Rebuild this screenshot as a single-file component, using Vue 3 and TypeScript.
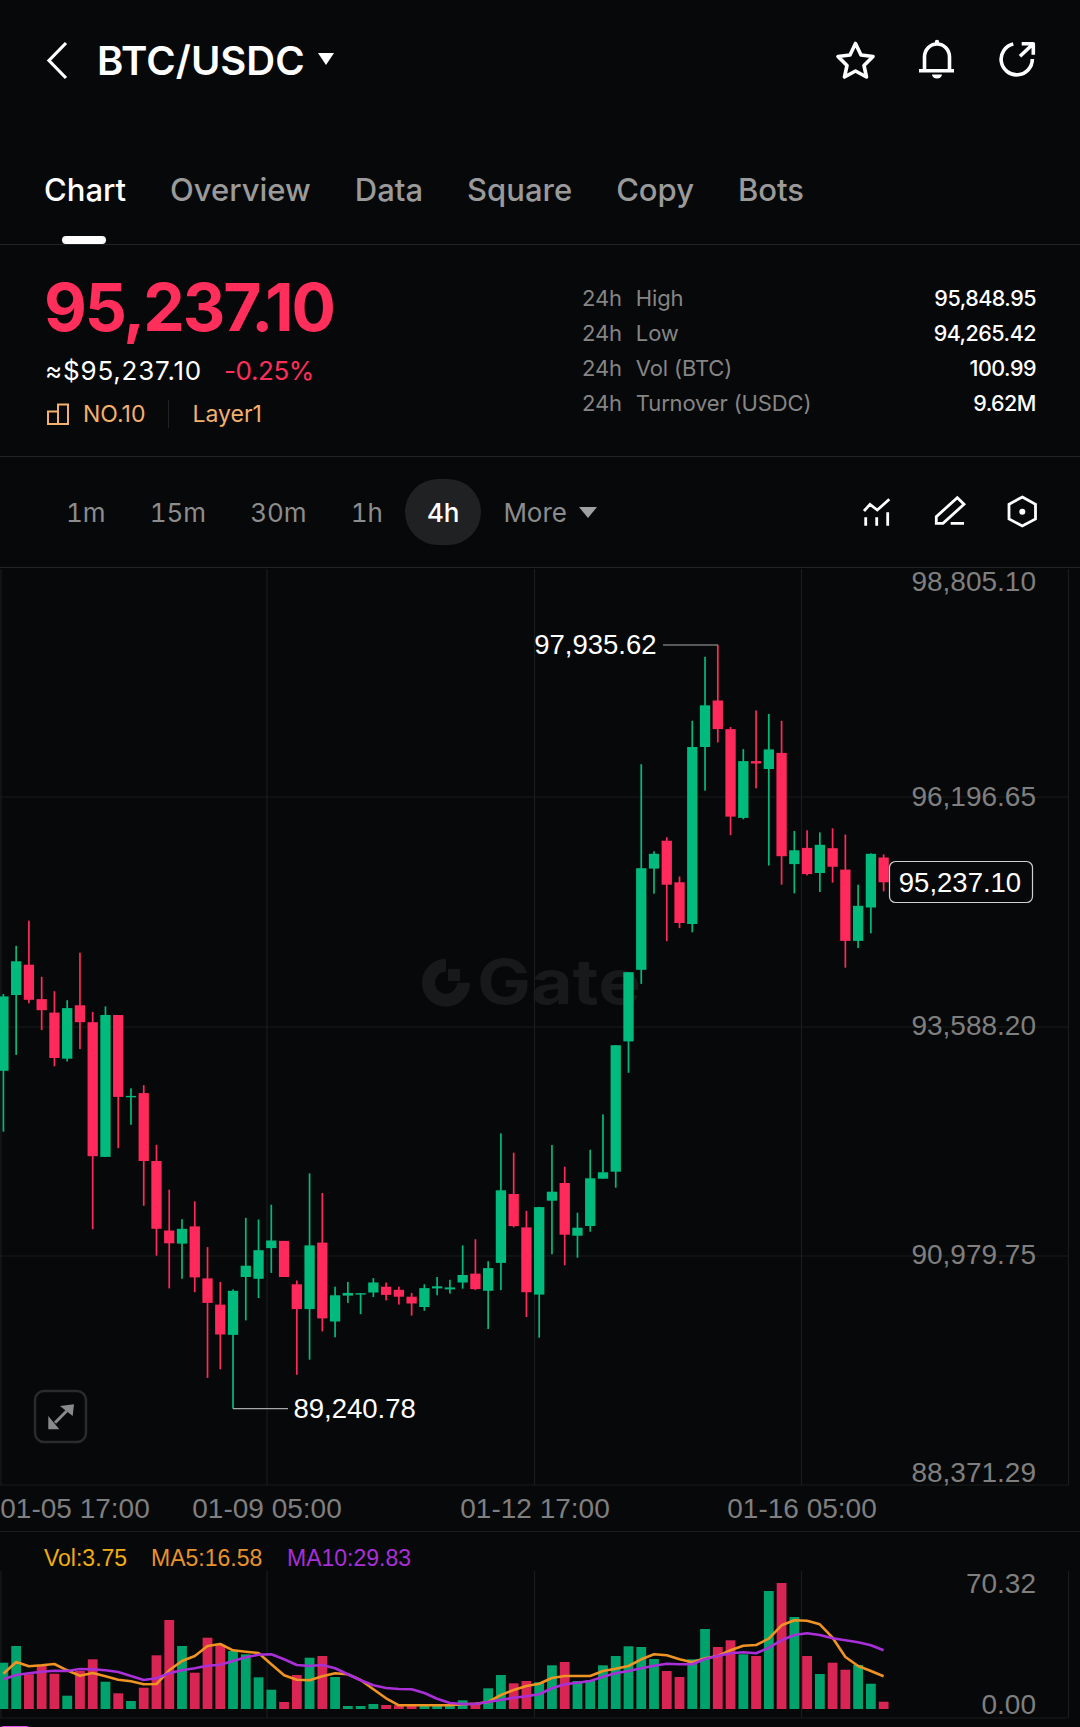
<script setup lang="ts">
// [high, bodyTop, bodyBottom, low, up] in page pixels
type Candle = [number, number, number, number, number];

const candles: Candle[] = [
  [993, 995.4, 1069.8, 1130.7, 1], [944.8, 960.3, 994, 1053.9, 1], [919.6, 963.7, 998.8, 1002.3, 0],
  [975.8, 998.1, 1009.2, 1029.1, 0], [990.2, 1011.6, 1057, 1065.3, 0], [999.2, 1007.1, 1057.7, 1060.5, 1],
  [951.7, 1004.3, 1021.2, 1048.1, 0], [1010.9, 1021.2, 1155.2, 1228.2, 0], [1005.4, 1014, 1155.9, 1155.9, 1],
  [1014, 1014, 1095.9, 1147.2, 0], [1087.3, 1094.9, 1096.3, 1123.8, 1], [1084.2, 1092.1, 1160, 1204.8, 0],
  [1143.8, 1160, 1227.8, 1254.7, 0], [1188.6, 1229.5, 1242.3, 1287.4, 0], [1218.2, 1227.8, 1242.6, 1277.8, 1],
  [1200.3, 1225.4, 1276.4, 1291.2, 0], [1246.1, 1277.4, 1301.9, 1376.9, 0], [1280.9, 1303.6, 1333.5, 1368.3, 0],
  [1288.4, 1289.8, 1333.9, 1407.6, 1], [1216.8, 1264.7, 1276, 1319.4, 1], [1218.5, 1249.2, 1277.8, 1297, 1],
  [1203.7, 1239.5, 1247.1, 1271.9, 1], [1239.9, 1239.9, 1276, 1276, 0], [1279.5, 1283.3, 1308.1, 1373.8, 0],
  [1172.4, 1244.4, 1308.1, 1358.7, 1], [1192, 1241.6, 1317.4, 1330.4, 0], [1285.7, 1294.3, 1320.5, 1336.3, 1],
  [1280.9, 1291.9, 1294.6, 1301.9, 1], [1292.2, 1292.2, 1293.6, 1313.2, 1], [1277.1, 1281.5, 1291.5, 1296, 1],
  [1281.5, 1285.7, 1293.9, 1299.4, 0], [1285.7, 1288.8, 1295.7, 1303.6, 0], [1291.9, 1295.7, 1302.5, 1314.6, 0],
  [1283.3, 1287.1, 1306, 1309.8, 1], [1276, 1285.3, 1287.4, 1294.3, 1], [1278.8, 1286.4, 1288.4, 1292.6, 1],
  [1244.4, 1274, 1281.5, 1287.7, 1], [1238.2, 1272.6, 1288.1, 1289.1, 0], [1260.2, 1267.1, 1289.8, 1328, 1],
  [1132.4, 1189.3, 1261.9, 1289.1, 1], [1151.7, 1193, 1225.1, 1226.4, 0], [1209.9, 1226.4, 1291.2, 1316, 0],
  [1205.8, 1206.1, 1293.6, 1336.7, 1], [1144, 1190.7, 1199.7, 1253.3, 1], [1165.7, 1182, 1233.7, 1264.3, 0],
  [1211.7, 1226.7, 1234.7, 1256.7, 1], [1148.7, 1177.3, 1225, 1230.7, 1], [1113.3, 1171.3, 1177.7, 1177.7, 1],
  [1044.2, 1044.2, 1170.7, 1186.7, 1], [971.2, 971.2, 1040.4, 1071.8, 1], [763.2, 867.2, 968.8, 982.9, 1],
  [850.3, 852.8, 867.6, 892.7, 1], [836.2, 839.7, 883.7, 940.2, 0], [875.5, 881.3, 922, 927.1, 0],
  [719.8, 746, 923, 931.3, 1], [655.8, 704.3, 746, 789.7, 1], [644.1, 699.5, 728.1, 741.5, 0],
  [726, 728.1, 815.6, 834.2, 0], [748.1, 760.1, 816.9, 818.3, 1], [709.5, 760.1, 762.5, 787.3, 0],
  [712.9, 748.4, 768, 864.5, 1], [719.8, 751.9, 855.2, 883.7, 0], [830, 849.3, 863.1, 892.4, 1],
  [829.3, 846.9, 873.1, 874.4, 0], [831.4, 843.8, 872, 891, 1], [827.3, 847.2, 865.8, 881.7, 0],
  [833.5, 868.6, 939.9, 966.7, 0], [883.7, 904.8, 939.9, 947.1, 1], [852.4, 852.8, 906.5, 932.3, 1],
  [853.4, 856.5, 881.3, 890.3, 0],
];

// px above the volume baseline
const volumes = [
  46.3, 63, 34.7, 43, 35.3, 13.3, 38, 49.7, 27.3, 15.7, 8, 21.3, 53.7, 89, 63, 36.3, 71.3, 64, 58, 54.7,
  31.7, 19.3, 7, 34, 51.3, 53, 32, 3, 3, 5, 4, 3.7, 3.7, 3.7, 3.7, 3.7, 8.7, 6.3, 20.7, 34,
  25.7, 28, 26.7, 43.7, 47, 28, 28.7, 43.7, 53, 62.7, 62, 50, 38, 32, 49.7, 80, 62, 68.7, 54.7, 53,
  118, 126, 92, 53, 35, 46.3, 39.3, 44, 25.3, 7.3,
];
const ma5 = [
  35.3, 47, 42.7, 43.7, 45, 38.7, 33.3, 36, 32.7, 29.3, 27.7, 24.7, 25, 38.7, 48, 53, 63, 65, 58.7, 57.3,
  56, 44.7, 33.7, 29.3, 28.7, 32.7, 35.7, 34.7, 29, 19.7, 10.7, 3.7, 3.7, 3.7, 3.7, 3.7, 4.7, 5.3, 7, 14,
  19, 23, 25.3, 31, 33, 33, 33, 38, 40.3, 43, 49.7, 54.7, 53.7, 49.7, 46.7, 50.7, 53, 58.7, 63.3, 64,
  70.3, 83.7, 88.7, 88.3, 84.7, 71.3, 52, 43, 38, 32.7,
];
const ma10 = [
  29.7, 34, 35.7, 37.3, 38.3, 38, 40, 39.7, 38.7, 37, 33, 29, 30.7, 35.7, 38.7, 40.7, 43.3, 44.3, 48, 51.7,
  54.3, 54.7, 49.7, 44, 43, 44, 40.7, 34.7, 28.7, 23.7, 21, 20, 19.7, 16, 10.3, 6, 5, 5, 7, 9,
  11.3, 12.7, 14.7, 20.7, 24.7, 26.3, 28, 32.3, 35.7, 38, 40.7, 43.3, 45.3, 44.7, 44.7, 50, 53, 55.7, 56.7, 55.7,
  61.3, 68.7, 74, 75.7, 74, 70.7, 68.7, 66.7, 63.7, 58.7,
];

const baseY = 1708;
const xAt = (i: number) => 3.4 + 12.757 * i;
const linePoints = (series: number[]) =>
  series.map((v, i) => `${xAt(i).toFixed(1)},${(baseY - v).toFixed(1)}`).join(" ");

const tabs = ["Chart", "Overview", "Data", "Square", "Copy", "Bots"];
const frames = ["1m", "15m", "30m", "1h", "4h"];
const stats = [
  { label: "High", value: "95,848.95" },
  { label: "Low", value: "94,265.42" },
  { label: "Vol (BTC)", value: "100.99" },
  { label: "Turnover (USDC)", value: "9.62M" },
];
const gridX = [1, 267, 534.5, 801.5, 1068.5];
const gridY = [796, 1026, 1255];
const priceAxis = [
  { text: "98,805.10", y: 590 },
  { text: "96,196.65", y: 804.5 },
  { text: "93,588.20", y: 1033.5 },
  { text: "90,979.75", y: 1262.5 },
  { text: "88,371.29", y: 1480.5 },
];
const timeAxis = [
  { text: "01-05 17:00", x: 75 },
  { text: "01-09 05:00", x: 267 },
  { text: "01-12 17:00", x: 535 },
  { text: "01-16 05:00", x: 802 },
];
</script>

<template>
  <div class="screen">
    <header class="topbar">
      <svg class="back" width="24" height="40" viewBox="0 0 24 40" aria-hidden="true">
        <path d="M20 3 3 20.5 20 38" />
      </svg>
      <span class="pair">BTC/USDC</span>
      <span class="caret"></span>
      <div class="top-actions">
        <svg width="44" height="44" viewBox="0 0 44 44" aria-hidden="true">
          <path d="M21.5 5.5 27 17l12 1.5-9 9L32.500 39l-11-6-11 6 2.500-11.500-9-9L16 17Z" />
        </svg>
        <svg width="42" height="44" viewBox="0 0 42 44" aria-hidden="true">
          <path d="M8.500 32V19a12.500 13 0 0 1 25 0v13M3 32.700h35" />
          <circle class="solid" cx="21" cy="4" r="2.200" />
          <path class="solid" d="M16 36.500h10a5 4 0 0 1-10 0Z" />
        </svg>
        <svg class="share" width="40" height="44" viewBox="0 0 40 44" aria-hidden="true">
          <path d="M15.300 6A15.600 15.600 0 1 0 34.300 21M22 18.300 35.300 5.700M23.700 5.700h11.600v11" />
        </svg>
      </div>
    </header>

    <nav class="tabs">
      <span v-for="(tab, i) in tabs" :key="tab" class="tab" :class="{ active: i === 0 }">{{ tab }}</span>
    </nav>

    <section class="ticker">
      <div class="ticker-main">
        <div class="last-price">95,237.10</div>
        <div class="sub-price">
          <span class="usd">≈$95,237.10</span>
          <span class="change">-0.25%</span>
        </div>
        <div class="rank">
          <svg width="24" height="22" viewBox="0 0 24 22" aria-hidden="true">
            <path d="M12 8.500H2V21h20V1.500H12V21" />
          </svg>
          <span>NO.10</span>
          <i class="rank-sep"></i>
          <span>Layer1</span>
        </div>
      </div>
      <div class="ticker-stats">
        <div v-for="s in stats" :key="s.label" class="stat">
          <span class="stat-label"><span>24h</span><span>{{ s.label }}</span></span>
          <span class="stat-value">{{ s.value }}</span>
        </div>
      </div>
    </section>

    <section class="toolbar">
      <span v-for="f in frames" :key="f" class="frame" :class="{ active: f === '4h' }">{{ f }}</span>
      <span class="frame more">More<i class="more-caret"></i></span>
      <div class="tools">
        <svg class="tool-lines" width="32" height="34" viewBox="0 0 32 34" aria-hidden="true">
          <path d="M4 16 10 9.300 17.300 15 29.300 4.300M5.700 22.300v8.400M16.700 22.300v8.400M27.700 17.300v13.400" />
        </svg>
        <svg width="38" height="34" viewBox="0 0 38 34" aria-hidden="true">
          <path d="M7.300 28.300v-6.600L28.300 2.700 35 9.300 14 28.300ZM21.700 28.300H35" />
        </svg>
        <svg width="40" height="36" viewBox="0 0 40 36" aria-hidden="true">
          <path d="M20.300 3 33.500 10.300V25L20.300 32 7 25V10.300Z" />
          <circle class="solid" cx="20.300" cy="17.700" r="3" />
        </svg>
      </div>
    </section>

    <svg class="chart" width="1080" height="1160" viewBox="0 567 1080 1160" aria-hidden="true">
      <!-- watermark sits under the grid and candles -->
      <g class="watermark">
        <path d="M446 964.200A17.500 17.500 0 1 0 463.500 981.700" />
        <rect x="448" y="968" width="12" height="12" />
        <text x="477" y="1003" textLength="164" lengthAdjust="spacingAndGlyphs">Gate</text>
      </g>

      <g class="grid">
        <line v-for="x in gridX" :key="x" :x1="x" :x2="x" y1="568" y2="1484" />
        <line v-for="x in gridX" :key="'v' + x" :x1="x" :x2="x" y1="1570" y2="1717" />
        <line v-for="y in gridY" :key="y" x1="0" x2="1068.500" :y1="y" :y2="y" />
        <line x1="0" x2="1068.500" y1="1484" y2="1484" />
        <line x1="0" x2="1080" y1="1530.500" y2="1530.500" />
        <line x1="0" x2="1068.500" y1="1717" y2="1717" />
      </g>

      <g v-for="(c, i) in candles" :key="i" :fill="c[4] ? '#00bb7c' : '#ff2a5b'">
        <rect :x="xAt(i) - 0.850" :y="c[0]" width="1.700" :height="c[3] - c[0]" />
        <rect :x="xAt(i) - 5.150" :y="c[1]" width="10.300" :height="c[2] - c[1]" />
      </g>

      <path class="marker" d="M663 644H718" />
      <path class="marker" d="M233 1407.600H288" />
      <text class="axis white" x="656.500" y="652.500" text-anchor="end">97,935.62</text>
      <text class="axis white" x="293.500" y="1416.500">89,240.78</text>

      <text v-for="p in priceAxis" :key="p.text" class="axis" x="1036" :y="p.y" text-anchor="end">{{ p.text }}</text>
      <text v-for="t in timeAxis" :key="t.text" class="axis" :x="t.x" y="1517" text-anchor="middle">{{ t.text }}</text>

      <rect class="price-tag" x="889.500" y="860.500" width="143" height="41" rx="6" />
      <text class="axis white" x="960" y="891" text-anchor="middle">95,237.10</text>

      <g class="expand">
        <rect x="35" y="1390" width="51" height="51" rx="9" />
        <path class="expand-line" d="M55 1421.700 66.700 1410" />
        <path class="expand-head" d="M60 1405 74 1403.300 72.700 1415ZM48.300 1415 59.300 1428.300H48.300Z" />
      </g>

      <text class="legend" x="44" y="1565" fill="#f2ad13">Vol:3.75</text>
      <text class="legend" x="151" y="1565" fill="#e8922e">MA5:16.58</text>
      <text class="legend" x="287" y="1565" fill="#a92fd8">MA10:29.83</text>

      <rect
        v-for="(v, i) in volumes"
        :key="i"
        :x="xAt(i) - 4.900"
        :y="baseY - v"
        width="9.800"
        :height="v"
        :fill="candles[i][4] ? '#00a26c' : '#d92553'"
      />
      <polyline class="ma" stroke="#ef9423" :points="linePoints(ma5)" />
      <polyline class="ma" stroke="#a92fd8" :points="linePoints(ma10)" />

      <text class="axis" x="1036" y="1592" text-anchor="end">70.32</text>
      <text class="axis" x="1036" y="1713" text-anchor="end">0.00</text>

      <rect x="0" y="1725" width="30" height="8" rx="4" fill="#dc55e4" />
    </svg>
  </div>
</template>

<style>
html,
body {
  background: #070809;
}
</style>

<style scoped>
.screen {
  width: 1080px;
  height: 1727px;
  overflow: hidden;
  background: #070809;
  color: #fff;
  font-family: Inter, "Liberation Sans", sans-serif;
}

svg {
  display: block;
  flex: none;
  fill: none;
  stroke: currentColor;
}

.solid {
  fill: currentColor;
  stroke: none;
}

.topbar {
  display: flex;
  align-items: center;
  height: 120px;
  padding: 0 42px 0 46px;
}

.back {
  stroke-width: 3.200;
  margin-right: 27px;
}

.pair {
  font-size: 40px;
  font-weight: 600;
}

.caret {
  width: 0;
  height: 0;
  margin: -2px 0 0 13px;
  border-left: 8px solid transparent;
  border-right: 8px solid transparent;
  border-top: 12px solid #fff;
}

.top-actions {
  display: flex;
  align-items: center;
  gap: 38px;
  margin-left: auto;
}

.top-actions svg {
  stroke-width: 3.600;
  stroke-linejoin: round;
}

.top-actions .share {
  margin-left: 2px;
}

.tabs {
  display: flex;
  gap: 44px;
  height: 125px;
  padding: 52px 0 0 44px;
  border-bottom: 1px solid #222324;
  box-sizing: border-box;
}

.tab {
  position: relative;
  height: 36px;
  font-size: 31px;
  font-weight: 500;
  line-height: 36px;
  color: #9a9a9a;
}

.tab.active {
  color: #fff;
}

.tab.active::after {
  content: "";
  position: absolute;
  left: 18px;
  top: 64px;
  width: 44px;
  height: 8px;
  border-radius: 4px;
  background: #fff;
}

.ticker {
  display: flex;
  justify-content: space-between;
  height: 212px;
  padding: 0 44px 0 45px;
  border-bottom: 1px solid #222324;
  box-sizing: border-box;
}

.last-price {
  margin: 22px 0 0 -1px;
  font-size: 66px;
  font-weight: 700;
  line-height: 80px;
  letter-spacing: -2.100px;
  color: #ff2e5b;
}

.sub-price {
  display: flex;
  gap: 22px;
  margin-top: 6px;
  font-size: 26px;
  line-height: 36px;
}

.usd {
  letter-spacing: 0.800px;
}

.change {
  letter-spacing: -0.400px;
  color: #ff2e5b;
}

.rank {
  display: flex;
  align-items: center;
  margin-top: 10px;
  height: 30px;
  font-size: 23px;
  color: #f4b06d;
}

.rank svg {
  stroke-width: 2;
  margin: 0 13px 0 1px;
}

.rank-sep {
  width: 1px;
  height: 28px;
  margin: 0 23px;
  background: #222324;
}

.ticker-stats {
  width: 454px;
  padding-top: 35px;
}

.stat {
  display: flex;
  justify-content: space-between;
  align-items: center;
  height: 35px;
  font-size: 22px;
}

.stat-label {
  display: flex;
  gap: 14px;
  letter-spacing: -0.150px;
  color: #858585;
}

.stat-value {
  font-size: 21.500px;
  font-weight: 500;
  letter-spacing: -0.500px;
}

.toolbar {
  display: flex;
  align-items: center;
  height: 111px;
  padding: 0 38px 0 44px;
  border-bottom: 1px solid #222324;
  box-sizing: border-box;
}

.frame {
  display: flex;
  align-items: center;
  height: 66px;
  padding: 0 22px;
  border-radius: 33px;
  font-size: 26px;
  font-variant-numeric: tabular-nums;
  color: #8c8c8c;
}

.frame.active {
  background: #1f2122;
  color: #fff;
  font-weight: 500;
}

.more-caret {
  width: 0;
  height: 0;
  margin: 0 0 0 12px;
  border-left: 9px solid transparent;
  border-right: 9px solid transparent;
  border-top: 11px solid #a0a0a0;
}

.tools {
  display: flex;
  align-items: center;
  margin-left: auto;
  gap: 35px;
}

.tools svg {
  stroke-width: 2.800;
}

.tool-lines {
  margin-right: 2px;
}

.chart {
  stroke: none;
  overflow: visible;
}

.grid line {
  stroke: #1b1c1d;
  stroke-width: 1.200;
}

.watermark {
  fill: #17191a;
  stroke: none;
}

.watermark path {
  fill: none;
  stroke: #17191a;
  stroke-width: 13;
}

.watermark text {
  font-family: Inter, sans-serif;
  font-size: 62px;
  font-weight: 700;
  stroke: none;
}

.marker {
  fill: none;
  stroke: #a8a8a8;
  stroke-width: 1.200;
}

.axis {
  font-family: "Liberation Sans", Arial, sans-serif;
  font-size: 28px;
  fill: #7f7f7f;
  stroke: none;
}

.axis.white {
  font-size: 27.500px;
  fill: #fff;
}

.price-tag {
  fill: #070809;
  stroke: #d0d0d0;
  stroke-width: 1.200;
}

.expand rect {
  fill: none;
  stroke: #2a2b2c;
  stroke-width: 2.500;
}

.expand-line {
  fill: none;
  stroke: #8a8a8a;
  stroke-width: 3;
}

.expand-head {
  fill: #8a8a8a;
}

.legend {
  font-family: "Liberation Sans", Arial, sans-serif;
  font-size: 23px;
  stroke: none;
}

.ma {
  fill: none;
  stroke-width: 2.600;
  stroke-linejoin: round;
}
</style>
